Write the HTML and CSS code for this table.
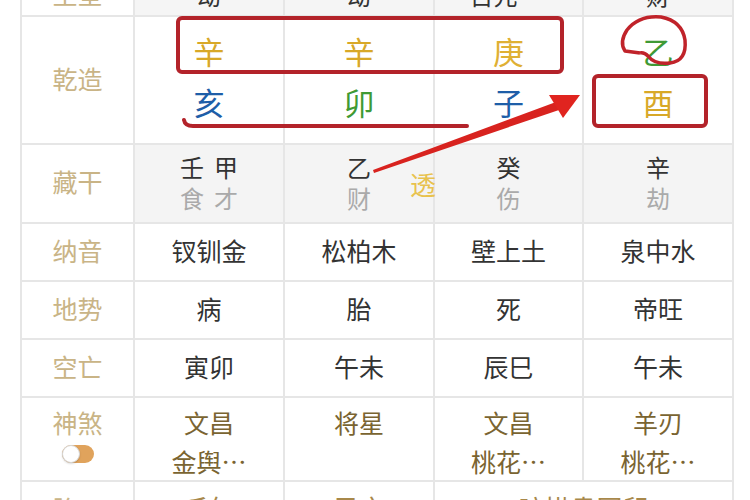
FILE: index.html
```html
<!DOCTYPE html>
<html lang="zh-CN">
<head>
<meta charset="utf-8">
<title>八字排盘</title>
<link rel="stylesheet" href="styles.css">
</head>
<body>
<div class="page">
  <div class="chart">
    <div class="cell label">主星</div>
    <div class="cell head">劫</div>
    <div class="cell head">劫</div>
    <div class="cell head">日元<span class="dot"></span></div>
    <div class="cell head">财</div>

    <div class="cell label">乾造</div>
    <div class="cell pillar"><span class="c-gold">辛</span><span class="c-blue">亥</span></div>
    <div class="cell pillar"><span class="c-gold">辛</span><span class="c-green">卯</span></div>
    <div class="cell pillar"><span class="c-gold2">庚</span><span class="c-blue">子</span></div>
    <div class="cell pillar"><span class="c-green">乙</span><span class="c-gold">酉</span></div>

    <div class="cell label">藏干</div>
    <div class="cell hidden"><div class="pair"><span>壬</span><span>甲</span></div><div class="pair sub"><span>食</span><span>才</span></div></div>
    <div class="cell hidden"><div class="pair"><span>乙</span></div><div class="pair sub"><span>财</span></div></div>
    <div class="cell hidden"><div class="pair"><span>癸</span></div><div class="pair sub"><span>伤</span></div></div>
    <div class="cell hidden"><div class="pair"><span>辛</span></div><div class="pair sub"><span>劫</span></div></div>

    <div class="cell label">纳音</div>
    <div class="cell text">钗钏金</div>
    <div class="cell text">松柏木</div>
    <div class="cell text">壁上土</div>
    <div class="cell text">泉中水</div>

    <div class="cell label">地势</div>
    <div class="cell text">病</div>
    <div class="cell text">胎</div>
    <div class="cell text">死</div>
    <div class="cell text">帝旺</div>

    <div class="cell label">空亡</div>
    <div class="cell text">寅卯</div>
    <div class="cell text">午未</div>
    <div class="cell text">辰巳</div>
    <div class="cell text">午未</div>

    <div class="cell label shensha-label">神煞<span class="toggle"><span class="knob"></span></span></div>
    <div class="cell shensha"><span>文昌</span><span>金舆…</span></div>
    <div class="cell shensha"><span>将星</span><span>&nbsp;</span></div>
    <div class="cell shensha"><span>文昌</span><span>桃花…</span></div>
    <div class="cell shensha"><span>羊刃</span><span>桃花…</span></div>

    <div class="cell label">胎元</div>
    <div class="cell gold">壬午</div>
    <div class="cell gold">己亥</div>
    <div class="cell gold wide">暗拱贵国印</div>
  </div>

  <span class="tou">透</span>

  <svg class="marks" width="750" height="500" viewBox="0 0 750 500" xmlns="http://www.w3.org/2000/svg">
    <rect x="178" y="18" width="384" height="54" rx="4" fill="none" stroke="#b3232a" stroke-width="4"/>
    <path d="M184,120 Q185,126 193,126 L467,126" fill="none" stroke="#b3232a" stroke-width="4" stroke-linecap="round"/>
    <rect x="594" y="76" width="112" height="50" rx="4" fill="none" stroke="#b3232a" stroke-width="4"/>
    <path d="M640,53 L625,51 Q619,42 627,30 Q639,15 661,17 Q682,21 685,40 Q687,61 670,63 Q655,65 648,56 Q644,52 640,53" fill="none" stroke="#c0232a" stroke-width="3.5" stroke-linejoin="round"/>
    <polygon points="373,170 556,102 559,110 374,173" fill="#d8231f"/>
    <polygon points="580,95 549,95 563,118" fill="#e0241f"/>
  </svg>
</div>
</body>
</html>
```

FILE: styles.css
```css
html, body {
  margin: 0;
  padding: 0;
  background: #ffffff;
}

body {
  width: 750px;
  height: 500px;
  overflow: hidden;
  font-family: "Noto Sans CJK SC", "Noto Sans", sans-serif;
}

.page {
  position: relative;
  width: 750px;
  height: 500px;
  overflow: hidden;
}

.chart {
  display: grid;
  grid-template-columns: 111px 148px 148px 147px 148px;
  grid-template-rows: 40px 126px 77px 56px 56px 56px 82px 56px;
  gap: 2px;
  padding: 2px;
  background: #e6e6e6;
  width: max-content;
  margin: -27px 0 0 20px;
}

.cell {
  background: #ffffff;
  display: flex;
  align-items: center;
  justify-content: center;
  font-size: 25px;
  color: #333333;
  line-height: 1;
  box-sizing: border-box;
}

.label {
  color: #c9b486;
  font-size: 25px;
  padding-bottom: 4px;
}

.head {
  background: #f5f5f5;
  color: #333333;
  font-size: 24px;
}

.dot {
  display: inline-block;
  width: 6px;
  height: 6px;
  border-radius: 50%;
  background: #d9433b;
  margin-left: 24px;
}

.pillar {
  flex-direction: column;
  font-size: 31px;
  line-height: 51px;
  padding-bottom: 8px;
}

.c-gold { color: #d8a828; }
.c-gold2 { color: #dfb034; }
.c-green { color: #3f9a34; }
.c-blue { color: #1e5ea8; }

.hidden {
  background: #f4f4f4;
  flex-direction: column;
  font-size: 24px;
  padding-bottom: 3px;
}

.pair {
  display: flex;
  gap: 10px;
  line-height: 31px;
  color: #333333;
}

.pair.sub {
  color: #aaaaaa;
}

.text {
  font-size: 25px;
  padding-bottom: 4px;
}

.shensha-label {
  flex-direction: column;
  gap: 10px;
  padding-bottom: 6px;
}

.toggle {
  position: relative;
  display: block;
  width: 32px;
  height: 18px;
  border-radius: 9px;
  background: #e0a35c;
}

.knob {
  position: absolute;
  left: 0;
  top: 0;
  width: 18px;
  height: 18px;
  border-radius: 50%;
  background: #ffffff;
  box-sizing: border-box;
  border: 1px solid #d6d6d6;
  box-shadow: 0 1px 2px rgba(0, 0, 0, 0.15);
}

.shensha {
  flex-direction: column;
  font-size: 25px;
  line-height: 39px;
  color: #7a6431;
  padding-top: 6px;
}

.gold {
  color: #a8884a;
  font-size: 26px;
  padding-bottom: 4px;
}

.wide {
  grid-column: span 2;
}

.tou {
  position: absolute;
  left: 410px;
  top: 169px;
  font-size: 26px;
  line-height: 30px;
  color: #e8c24e;
}

.marks {
  position: absolute;
  left: 0;
  top: 0;
  pointer-events: none;
}
```
